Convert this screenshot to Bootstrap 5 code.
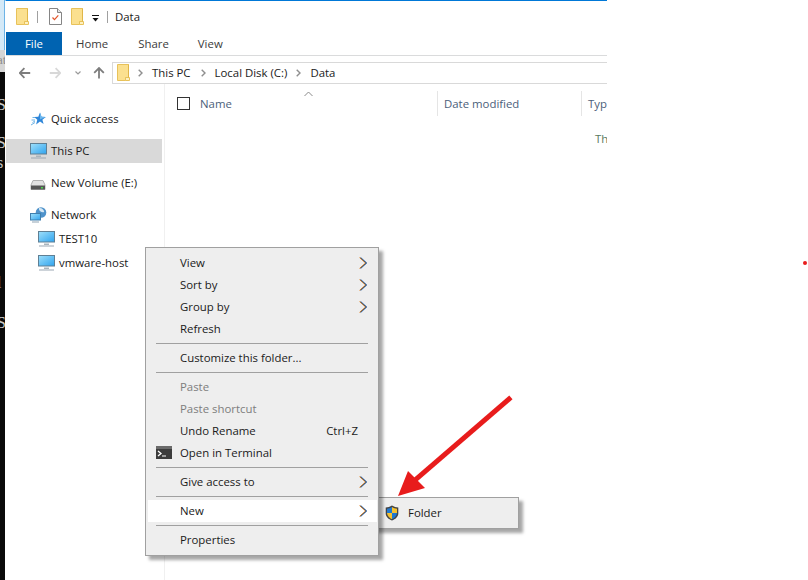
<!DOCTYPE html>
<html lang="en">

<head>
    <meta charset="UTF-8" />
    <title>Data</title>
    <link href="https://cdn.jsdelivr.net/npm/bootstrap@5.3.0/dist/css/bootstrap.min.css" rel="stylesheet" />
    <style>
        html, body {
            margin: 0;
            background: #fff;
        }

        .screen {
            width: 808px;
            height: 580px;
            overflow: hidden;
            font-family: "Open Sans", "Noto Sans", sans-serif;
            font-size: 11.4px;
            line-height: 16px;
            color: #1a1a1a;
        }

        /* what is left of the windows behind */
        .back-strip {
            width: 5px;
            height: 580px;
            background: #0a0a0a;
            color: #c9c9c9;
            overflow: hidden;
            font-family: "Liberation Serif", serif;
            font-size: 16px;
            line-height: 20px;
        }

        .back-light {
            height: 50px;
            background: #d4e9f7;
            border-right: 1px solid #6db3e6;
        }

        .back-grey {
            height: 22px;
            background: #d6d6d6;
            color: #8a8a8a;
            font-size: 13px;
            white-space: nowrap;
        }

        .frag {
            display: block;
            height: 20px;
            margin-left: -3px;
        }

        .frag-a { margin-top: 23px; }
        .frag-b { margin-top: 18px; }
        .frag-c { margin-top: 100px; }
        .frag-d { margin-top: 20px; }

        .win {
            width: 602px;
            height: 580px;
            border-top: 1px solid #0078d7;
            border-left: 1px solid #fff;
        }

        .title-row {
            height: 31px;
            padding-left: 10px;
        }

        .title-row .bar {
            width: 1px;
            height: 12px;
            background: #a0a0a0;
        }

        .tab-row {
            height: 24px;
            border-bottom: 1px solid #dadbdc;
        }

        .tab-file {
            width: 56px;
            height: 23px;
            background: #0063b1;
            color: #fff;
        }

        .tab-plain {
            color: #3b3b3b;
        }

        .addr-row {
            height: 28px;
            padding-left: 13px;
            padding-top: 5px;
        }

        .addr-box {
            height: 22px;
            border: 1px solid #d9d9d9;
            border-right: 0;
            margin-left: 7px;
            flex: 1;
            padding-left: 4px;
        }

        /* small hand measured gaps */
        .gl-7 { margin-left: 7px; }
        .gl-8 { margin-left: 8px; }
        .gl-9 { margin-left: 9px; }
        .gl-10 { margin-left: 10px; }
        .gl-11 { margin-left: 11px; }
        .gl-12 { margin-left: 12px; }
        .gl-14 { margin-left: 14px; }
        .gl-18 { margin-left: 18px; }
        .gl-29 { margin-left: 29px; }
        .gl-30 { margin-left: 30px; }

        .pane-nav {
            width: 159px;
            height: 496px;
            padding-top: 23px;
            border-right: 1px solid #f0f0f0;
        }

        .nav-row {
            height: 24px;
            padding-left: 24px;
            margin-right: 2px;
            gap: 4px;
            margin-bottom: 8px;
        }

        .nav-row.sub {
            padding-left: 32px;
            margin-bottom: 0;
        }

        .nav-row.picked {
            background: #d9d9d9;
        }

        .nav-row.tight {
            margin-bottom: 0;
        }

        .nav-gap {
            gap: 5px;
        }

        .pane-list {
            height: 496px;
            overflow: hidden;
        }

        .col-head {
            height: 39px;
            color: #4c607a;
            position: relative;
        }

        .head-check {
            width: 13px;
            height: 13px;
            border: 1px solid #333;
            margin-left: 12px;
            margin-right: 10px;
        }

        .head-name {
            width: 237px;
        }

        .head-sep {
            width: 1px;
            height: 25px;
            background: #e5e5e5;
        }

        .head-date {
            width: 143px;
            padding-left: 6px;
        }

        .head-type {
            padding-left: 6px;
        }

        .sort-caret {
            position: absolute;
            left: 139px;
            top: 7px;
        }

        .empty-note {
            color: #587a5e;
            padding-left: 430px;
            margin-top: 8px;
        }

        .pin-dot {
            width: 4px;
            height: 4px;
            background: #e81c1c;
            border-radius: 50%;
            margin-left: 196px;
            margin-top: 261px;
        }

        /* context menu */
        .ctx-menu {
            left: 145px;
            top: 247px;
            width: 234px;
            padding: 4px 1px 4px 2px;
            background: #eeeeee;
            border: 1px solid #a0a0a0;
            border-radius: 0;
            box-shadow: 4px 4px 3px rgba(0, 0, 0, .35);
            color: #1a1a1a;
            min-width: 0;
        }

        .ctx-menu .dropdown-item {
            height: 22px;
            padding: 0 19px 0 32px;
            font-size: 11.4px;
            line-height: 22px;
            color: #1a1a1a;
            position: relative;
        }

        .ctx-menu .dropdown-item.disabled {
            color: #7d7d7d;
        }

        .ctx-menu .dropdown-item.active {
            background: #fff;
            color: #1a1a1a;
        }

        .ctx-menu .dropdown-divider {
            margin: 3px 9px 3px 8px;
            border-top: 1px solid #a0a0a0;
            opacity: 1;
        }

        .ctx-icon {
            position: absolute;
            left: 8px;
            top: 4px;
        }

        .ctx-chev {
            position: absolute;
            right: 9px;
            top: 5px;
        }

        .sub-menu {
            left: 373px;
            top: 497px;
            width: 146px;
            height: 32px;
            padding: 0 0 0 11px;
            background: #eeeeee;
            border: 1px solid #a0a0a0;
            box-shadow: 4px 4px 3px rgba(0, 0, 0, .35);
            gap: 9px;
        }

        .callout {
            left: 390px;
            top: 390px;
        }
    </style>
</head>

<body>

    <svg width="0" height="0" class="position-absolute">
        <defs>
            <linearGradient id="screenFill" x1="0" y1="0" x2="1" y2="1">
                <stop offset="0" stop-color="#9fe0fb" />
                <stop offset="1" stop-color="#2fa3ee" />
            </linearGradient>
            <symbol id="ico-folder" viewBox="0 0 13 17">
                <path d="M.5.500h11v13h-3v3h-8z" fill="#fbe08f" stroke="#e8c25a" />
                <path d="M8.500 16.500v-3h4v3z" fill="#fdf0c2" stroke="#e8c25a" />
                <path d="M11.500.500v13" stroke="#e0b648" />
            </symbol>
            <symbol id="ico-monitor" viewBox="0 0 17 16">
                <rect x=".5" y=".5" width="16" height="10.500" fill="url(#screenFill)" stroke="#5f7f94" />
                <path d="M6 12.500h5v1.500H6z" fill="#a9b4bc" />
                <path d="M1 14.500h15v1H1z" fill="#9aa7b2" />
            </symbol>
            <symbol id="ico-chev" viewBox="0 0 9 12">
                <path d="M.5.600l6 5.400-6 5.400" fill="none" stroke="#e58a2e" stroke-width="1" />
                <path d="M1.800.600l6 5.400-6 5.400" fill="none" stroke="#2f6fc0" stroke-width="1" />
                <path d="M1.200.600l6 5.400-6 5.400" fill="none" stroke="#3a3a3a" stroke-width=".7" />
            </symbol>
            <symbol id="ico-crumb" viewBox="0 0 5 8">
                <path d="M.7.700L4 4 .7 7.300" fill="none" stroke="#8f8f8f" stroke-width="1.400" />
            </symbol>
        </defs>
    </svg>

    <div class="screen position-relative d-flex">

        <div class="back-strip flex-shrink-0">
            <div class="back-light"></div>
            <div class="back-grey"><span class="frag">at</span></div>
            <span class="frag frag-a">S</span>
            <span class="frag frag-b">S</span>
            <span class="frag">s</span>
            <span class="frag frag-c">l</span>
            <span class="frag frag-d">S</span>
        </div>

        <div class="win flex-shrink-0 d-flex flex-column">
            <!-- title bar -->
            <div class="title-row d-flex align-items-center">
                <svg width="13" height="17"><use href="#ico-folder" /></svg>
                <span class="bar gl-8"></span>
                <svg width="13" height="17" viewBox="0 0 13 17" class="gl-11">
                    <path d="M.5.500h8l4 4v12H.5z" fill="#fff" stroke="#858585" />
                    <path d="M8.500.500v4h4" fill="#e6e6e6" stroke="#858585" />
                    <path d="M3.500 9.500l2 2.200 3.800-4.400" fill="none" stroke="#e2552b" stroke-width="1.200" />
                </svg>
                <svg width="13" height="17" class="gl-9"><use href="#ico-folder" /></svg>
                <svg width="8" height="7" viewBox="0 0 8 7" class="gl-8 mt-1">
                    <path d="M0 0h7v1H0z" fill="#111" />
                    <path d="M.5 3h6L3.500 6.500z" fill="#111" />
                </svg>
                <span class="bar gl-7"></span>
                <span class="gl-7">Data</span>
            </div>

            <!-- ribbon tabs -->
            <div class="tab-row d-flex">
                <div class="tab-file d-flex align-items-center justify-content-center">File</div>
                <span class="tab-plain d-flex align-items-center gl-14">Home</span>
                <span class="tab-plain d-flex align-items-center gl-30">Share</span>
                <span class="tab-plain d-flex align-items-center gl-29">View</span>
            </div>

            <!-- address bar -->
            <div class="addr-row d-flex align-items-center">
                <svg width="12" height="12" viewBox="0 0 12 12">
                    <path d="M.6 6h10.600M5.400 1.200L.8 6l4.600 4.800" fill="none" stroke="#7d7d7d" stroke-width="1.800" />
                </svg>
                <svg width="12" height="12" viewBox="0 0 12 12" class="gl-18">
                    <path d="M.8 6h10.600M6.600 1.200L11.200 6l-4.600 4.800" fill="none" stroke="#d8d8d8" stroke-width="1.800" />
                </svg>
                <svg width="6" height="4" viewBox="0 0 6 4" class="gl-14">
                    <path d="M.5.500L3 3 5.500.500" fill="none" stroke="#9a9a9a" stroke-width="1.200" />
                </svg>
                <svg width="12" height="12" viewBox="0 0 12 12" class="gl-12">
                    <path d="M6 11.500V1M1.200 5.800L6 1l4.800 4.800" fill="none" stroke="#7d7d7d" stroke-width="1.800" />
                </svg>
                <div class="addr-box d-flex align-items-center">
                    <svg width="13" height="17"><use href="#ico-folder" /></svg>
                    <svg width="5" height="8" class="gl-8"><use href="#ico-crumb" /></svg>
                    <span class="gl-9">This PC</span>
                    <svg width="5" height="8" class="gl-10"><use href="#ico-crumb" /></svg>
                    <span class="gl-9">Local Disk (C:)</span>
                    <svg width="5" height="8" class="gl-9"><use href="#ico-crumb" /></svg>
                    <span class="gl-9">Data</span>
                </div>
            </div>

            <div class="d-flex">
                <!-- navigation pane -->
                <div class="pane-nav flex-shrink-0">
                    <div class="nav-row nav-gap d-flex align-items-center">
                        <svg width="16" height="15" viewBox="0 0 16 15">
                            <path d="M10 .6l1.500 4.100 4.300.2-3.400 2.800 1.200 4.400-3.600-2.500-3.900 2.900 1.200-4.800-3.100-2.800 4.100-.1z" fill="#2f86d8" />
                            <path d="M10 .6l1.500 4.100 4.300.2-5.800 2.600z" fill="#6db8ee" />
                            <path d="M2.500 5.500h2.500M1.500 8H5M2.500 10.500l2.500-1.500M1 13l4-2.500" stroke="#6db3e6" />
                        </svg>
                        <span>Quick access</span>
                    </div>
                    <div class="nav-row picked d-flex align-items-center">
                        <svg width="17" height="16"><use href="#ico-monitor" /></svg>
                        <span>This PC</span>
                    </div>
                    <div class="nav-row nav-gap d-flex align-items-center">
                        <svg width="16" height="10" viewBox="0 0 16 10" class="mt-1">
                            <path d="M3 .5h10L15 5v4.500H1V5z" fill="#e2e2e2" stroke="#b0b0b0" />
                            <path d="M1 5.500h14v4H1z" fill="#555" />
                            <path d="M11 7h2v1.500h-2z" fill="#4fd14f" />
                        </svg>
                        <span>New Volume (E:)</span>
                    </div>
                    <div class="nav-row tight d-flex align-items-center">
                        <svg width="17" height="16" viewBox="0 0 17 16">
                            <circle cx="11" cy="5.500" r="5.300" fill="#4f93cb" />
                            <path d="M9 1c2.800-.3 5 1.500 5.200 4-2.300.8-4.200-.3-5.200-2.500z" fill="#d5e7f4" />
                            <rect x=".5" y="6.500" width="10" height="6.500" fill="url(#screenFill)" stroke="#3f7fae" />
                            <path d="M2 14.500h7v1H2z" fill="#8ea2b2" />
                        </svg>
                        <span>Network</span>
                    </div>
                    <div class="nav-row sub d-flex align-items-center">
                        <svg width="17" height="16"><use href="#ico-monitor" /></svg>
                        <span>TEST10</span>
                    </div>
                    <div class="nav-row sub d-flex align-items-center">
                        <svg width="17" height="16"><use href="#ico-monitor" /></svg>
                        <span>vmware-host</span>
                    </div>
                </div>

                <!-- file list -->
                <div class="pane-list flex-grow-1">
                    <div class="col-head d-flex align-items-center">
                        <span class="head-check flex-shrink-0"></span>
                        <span class="head-name flex-shrink-0">Name</span>
                        <span class="head-sep flex-shrink-0"></span>
                        <span class="head-date flex-shrink-0">Date modified</span>
                        <span class="head-sep flex-shrink-0"></span>
                        <span class="head-type text-nowrap">Typ</span>
                        <svg class="sort-caret" width="9" height="6" viewBox="0 0 9 6">
                            <path d="M.5 5L4.500 1l4 4" fill="none" stroke="#8a8a8a" />
                        </svg>
                    </div>
                    <div class="empty-note text-nowrap">Th</div>
                </div>
            </div>
        </div>

        <div class="pin-dot flex-shrink-0"></div>

        <!-- right click menu -->
        <div class="dropdown-menu show ctx-menu position-absolute">
            <a class="dropdown-item">View<svg class="ctx-chev" width="9" height="12"><use href="#ico-chev" /></svg></a>
            <a class="dropdown-item">Sort by<svg class="ctx-chev" width="9" height="12"><use href="#ico-chev" /></svg></a>
            <a class="dropdown-item">Group by<svg class="ctx-chev" width="9" height="12"><use href="#ico-chev" /></svg></a>
            <a class="dropdown-item">Refresh</a>
            <hr class="dropdown-divider" />
            <a class="dropdown-item">Customize this folder...</a>
            <hr class="dropdown-divider" />
            <a class="dropdown-item disabled">Paste</a>
            <a class="dropdown-item disabled">Paste shortcut</a>
            <a class="dropdown-item d-flex justify-content-between">Undo Rename<span>Ctrl+Z</span></a>
            <a class="dropdown-item">
                <svg class="ctx-icon" width="16" height="13" viewBox="0 0 16 13">
                    <path d="M0 0h16v13H0z" fill="#3c3c3c" />
                    <path d="M0 0h16v3H0z" fill="#6a6a6a" />
                    <path d="M2 5l3 2.500L2 10" fill="none" stroke="#fff" stroke-width="1.300" />
                    <path d="M6 9.500h4v1H6z" fill="#fff" />
                </svg>Open in Terminal</a>
            <hr class="dropdown-divider" />
            <a class="dropdown-item">Give access to<svg class="ctx-chev" width="9" height="12"><use href="#ico-chev" /></svg></a>
            <hr class="dropdown-divider" />
            <a class="dropdown-item active">New<svg class="ctx-chev" width="9" height="12"><use href="#ico-chev" /></svg></a>
            <hr class="dropdown-divider" />
            <a class="dropdown-item">Properties</a>
        </div>

        <div class="sub-menu position-absolute d-flex align-items-center">
            <svg width="14" height="16" viewBox="0 0 14 16">
                <path d="M7 .5C5 1.800 3 2.300.7 2.500v6c0 3.300 3 5.800 6.300 7 3.300-1.200 6.300-3.700 6.300-7v-6C11 2.300 9 1.800 7 .5z" fill="#444" />
                <path d="M7 2C5.400 3 3.600 3.500 2 3.700V8h5z" fill="#1f78d1" />
                <path d="M7 2c1.600 1 3.400 1.500 5 1.700V8H7z" fill="#f5c12e" />
                <path d="M2 8h5v6.200C4.500 13.200 2.200 11 2 8z" fill="#f5c12e" />
                <path d="M7 8h5c-.2 3-2.500 5.200-5 6.200z" fill="#1f78d1" />
            </svg>
            <span>Folder</span>
        </div>

        <!-- red arrow drawn on the screenshot -->
        <svg class="callout position-absolute" width="130" height="112" viewBox="390 390 130 112">
            <path d="M509 399L414 481" stroke="#e81c1c" stroke-width="5" stroke-linecap="square" fill="none" />
            <path d="M398 496L408 471 425 488z" fill="#e81c1c" />
        </svg>
    </div>

    <script src="https://cdn.jsdelivr.net/npm/bootstrap@5.3.0/dist/js/bootstrap.bundle.min.js"></script>
</body>

</html>
